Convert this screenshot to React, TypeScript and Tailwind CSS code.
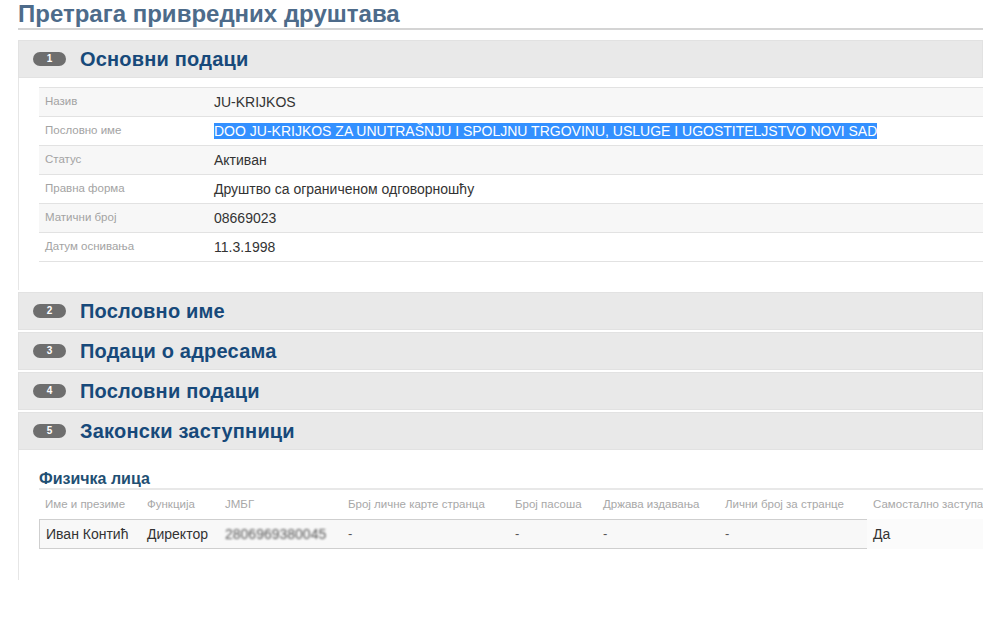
import React from "react";

const font = { fontFamily: '"Liberation Sans", Arial, sans-serif' };

function Badge({ n }: { n: number }) {
  return (
    <span className="inline-flex h-[14px] w-[33px] items-center justify-center rounded-full bg-[#6e6e6e] text-[10px] font-bold leading-none text-white">
      {n}
    </span>
  );
}

function PanelHeader({ n, title }: { n: number; title: string }) {
  return (
    <div className="flex h-[38px] items-center gap-[14px] border border-[#e2e2e2] bg-[#e9e9e9] pl-[14px]">
      <Badge n={n} />
      <span className="text-[20px] font-bold tracking-[0.2px] text-[#17497a]">{title}</span>
    </div>
  );
}

const rows: [string, React.ReactNode][] = [
  ["Назив", "JU-KRIJKOS"],
  [
    "Пословно име",
    <span className="bg-[#3390ff] text-white">
      DOO JU-KRIJKOS ZA UNUTRAŠNJU I SPOLJNU TRGOVINU, USLUGE I UGOSTITELJSTVO NOVI SAD
    </span>,
  ],
  ["Статус", "Активан"],
  ["Правна форма", "Друштво са ограниченом одговорношћу"],
  ["Матични број", "08669023"],
  ["Датум оснивања", "11.3.1998"],
];

const heads = [
  "Име и презиме",
  "Функција",
  "ЈМБГ",
  "Број личне карте странца",
  "Број пасоша",
  "Држава издавања",
  "Лични број за странце",
  "Самостално заступа",
];

export default function App() {
  return (
    <div style={font} className="h-[625px] w-[983px] overflow-hidden bg-white">
      <div className="pl-[18px]">
        <h1 className="h-[30px] border-b-2 border-[#d4d4d4] text-[24px] font-bold leading-[27px] text-[#4d6b8a]">
          Претрага привредних друштава
        </h1>

        <div className="mt-[10px]">
          <PanelHeader n={1} title="Основни подаци" />
          <div className="border-l border-[#e6e6e6] pb-[28px] pl-[20px] pt-[9px]">
            <div className="border-b border-[#e2e2e2]">
              {rows.map(([label, value], i) => (
                <div
                  key={label}
                  className={`flex h-[29px] items-center whitespace-nowrap border-t border-[#e2e2e2] ${
                    i % 2 === 0 ? "bg-[#f7f7f7]" : "bg-white"
                  }`}
                >
                  <div className="w-[175px] pl-[6px] text-[11.5px] text-[#a3a3a3]">{label}</div>
                  <div className="text-[14px] text-[#333]">{value}</div>
                </div>
              ))}
            </div>
          </div>
        </div>

        <div className="mt-[2px] flex flex-col gap-[2px]">
          <PanelHeader n={2} title="Пословно име" />
          <PanelHeader n={3} title="Подаци о адресама" />
          <PanelHeader n={4} title="Пословни подаци" />
          <PanelHeader n={5} title="Законски заступници" />
        </div>

        <div className="h-[130px] border-l border-[#e6e6e6] pl-[20px] pt-[21px]">
          <div className="h-[19px] border-b-2 border-[#e8e8e8] text-[16px] font-bold leading-[16px] text-[#1f4f73]">
            Физичка лица
          </div>
          <div className="grid grid-cols-[102px_78px_123px_167px_88px_122px_148px_200px] whitespace-nowrap">
            {heads.map((h) => (
              <div key={h} className="flex h-[29px] items-center pl-[6px] text-[11.5px] text-[#a8a8a8]">
                {h}
              </div>
            ))}
            <div className="flex h-[30px] items-center border-y border-l border-[#cfcfcf] bg-[#f8f8f8] pl-[6px] text-[14px] text-[#333]">
              Иван Контић
            </div>
            <div className="flex h-[30px] items-center border-y border-[#cfcfcf] bg-[#f8f8f8] pl-[6px] text-[14px] text-[#333]">
              Директор
            </div>
            <div className="flex h-[30px] items-center border-y border-[#cfcfcf] bg-[#f8f8f8] pl-[6px] text-[14px] text-[#555]">
              <span className="blur-[1px]">2806969380045</span>
            </div>
            <div className="flex h-[30px] items-center border-y border-[#cfcfcf] bg-[#f8f8f8] pl-[6px] text-[13px] text-[#555]">
              -
            </div>
            <div className="flex h-[30px] items-center border-y border-[#cfcfcf] bg-[#f8f8f8] pl-[6px] text-[13px] text-[#555]">
              -
            </div>
            <div className="flex h-[30px] items-center border-y border-[#cfcfcf] bg-[#f8f8f8] pl-[6px] text-[13px] text-[#555]">
              -
            </div>
            <div className="flex h-[30px] items-center border-y border-[#cfcfcf] bg-[#f8f8f8] pl-[6px] text-[13px] text-[#555]">
              -
            </div>
            <div className="flex h-[30px] items-center bg-[#fbfbfb] pl-[6px] text-[14px] text-[#333]">
              Да
            </div>
          </div>
        </div>
      </div>
    </div>
  );
}
